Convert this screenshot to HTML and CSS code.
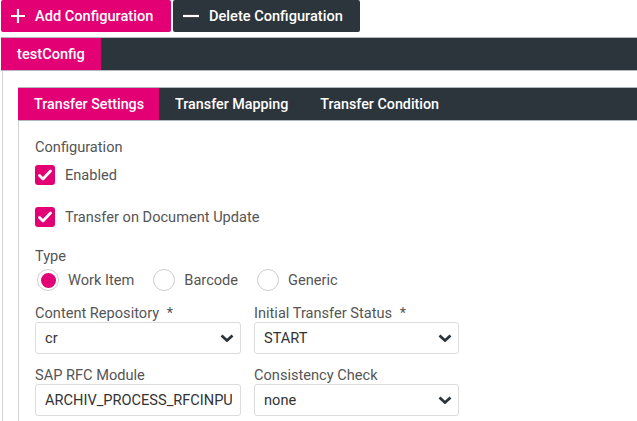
FILE: index.html
```html
<!DOCTYPE html>
<html>
<head>
<meta charset="utf-8">
<link rel="stylesheet" href="styles.css">
</head>
<body>
<div class="toolbar">
  <button class="btn btn-primary">
    <svg class="btn-icon" viewBox="0 0 14 14" width="14" height="14"><path d="M7 0v14M0 7h14" stroke="#fff" stroke-width="2.2"/></svg>
    Add Configuration
  </button>
  <button class="btn btn-dark">
    <svg class="btn-icon" viewBox="0 0 16 14" width="16" height="14"><path d="M0 7h16" stroke="#fff" stroke-width="2.2"/></svg>
    Delete Configuration
  </button>
</div>

<div class="config-tabs">
  <div class="tab tab-active">testConfig</div>
</div>

<div class="config-panel">
  <div class="inner-tabs">
    <div class="tab inner-tab tab-active">Transfer Settings</div>
    <div class="tab inner-tab">Transfer Mapping</div>
    <div class="tab inner-tab">Transfer Condition</div>
  </div>
  <div class="inner-panel">
    <div class="label">Configuration</div>
    <label class="check-row">
      <span class="checkbox"><svg viewBox="0 0 20 20" width="20" height="20"><path d="M4.5 10.5l3.5 3.5 7.5-8" fill="none" stroke="#fff" stroke-width="2.8" stroke-linecap="round" stroke-linejoin="round"/></svg></span>
      <span class="check-text">Enabled</span>
    </label>
    <label class="check-row check-row-2">
      <span class="checkbox"><svg viewBox="0 0 20 20" width="20" height="20"><path d="M4.5 10.5l3.5 3.5 7.5-8" fill="none" stroke="#fff" stroke-width="2.8" stroke-linecap="round" stroke-linejoin="round"/></svg></span>
      <span class="check-text">Transfer on Document Update</span>
    </label>

    <div class="label label-type">Type</div>
    <div class="radio-row">
      <label class="radio-item"><span class="radio radio-on"></span><span class="radio-text">Work Item</span></label>
      <label class="radio-item"><span class="radio"></span><span class="radio-text">Barcode</span></label>
      <label class="radio-item"><span class="radio"></span><span class="radio-text">Generic</span></label>
    </div>

    <div class="field-grid">
      <div class="field">
        <div class="label">Content Repository <span class="req">*</span></div>
        <div class="select"><span class="value">cr</span><svg class="chev" viewBox="0 0 14 8" width="14" height="8"><path d="M1.5 1.5l5.5 5 5.5-5" fill="none" stroke="#2d353c" stroke-width="2.8"/></svg></div>
      </div>
      <div class="field">
        <div class="label">Initial Transfer Status <span class="req">*</span></div>
        <div class="select"><span class="value">START</span><svg class="chev" viewBox="0 0 14 8" width="14" height="8"><path d="M1.5 1.5l5.5 5 5.5-5" fill="none" stroke="#2d353c" stroke-width="2.8"/></svg></div>
      </div>
      <div class="field">
        <div class="label">SAP RFC Module</div>
        <input class="input" type="text" readonly value="ARCHIV_PROCESS_RFCINPUT">
      </div>
      <div class="field">
        <div class="label">Consistency Check</div>
        <div class="select"><span class="value">none</span><svg class="chev" viewBox="0 0 14 8" width="14" height="8"><path d="M1.5 1.5l5.5 5 5.5-5" fill="none" stroke="#2d353c" stroke-width="2.8"/></svg></div>
      </div>
    </div>
  </div>
</div>
</body>
</html>
```
FILE: styles.css
```css
html, body {
  margin: 0;
  padding: 0;
  background: #fff;
  overflow: hidden;
}
body {
  font-family: Roboto, "Liberation Sans", sans-serif;
  font-size: 14.6px;
  color: #4b4b4b;
  width: 637px;
  height: 421px;
}
.toolbar {
  display: flex;
  gap: 2px;
  padding-left: 1px;
}
.btn {
  display: flex;
  align-items: center;
  gap: 10px;
  height: 32px;
  border: none;
  border-radius: 2px;
  color: #fff;
  font-family: Roboto, "Liberation Sans", sans-serif;
  font-size: 14.6px;
  font-weight: 500;
  padding: 0 10px;
  white-space: nowrap;
}
.btn-primary {
  background: #e20074;
  width: 170px;
}
.btn-dark {
  background: #2d353c;
  width: 187px;
}
.btn-icon { flex: none; }

.config-tabs {
  margin-top: 5px;
  display: flex;
  background: #2d353c;
  border-top: 1px solid #b4b9bd;
  border-bottom: 1px solid #b4b9bd;
  height: 32px;
  margin-left: 1px;
}
.tab {
  display: flex;
  align-items: center;
  color: #fff;
  font-weight: 500;
  font-size: 14.3px;
  padding: 0 16px;
  white-space: nowrap;
}
.config-tabs .tab {
  width: 100px;
  box-sizing: border-box;
  justify-content: center;
  font-size: 14.6px;
}
.tab-active {
  background: #e20074;
}
.config-panel {
  margin-left: 2px;
  border-left: 1px solid #d4d4d4;
  padding: 16px 0 0 15px;
}
.inner-tabs {
  display: flex;
  background: #2d353c;
  border-top: 1px solid #b4b9bd;
  border-bottom: 1px solid #b4b9bd;
  height: 32px;
}
.inner-tab {
  padding: 0 16px;
}
.inner-tabs .tab-active {
  padding: 0 15px 0 16px;
}
.inner-panel {
  border-left: 1px solid #d4d4d4;
  padding: 16px 0 0 16px;
  height: 300px;
}
.label {
  color: #555;
  line-height: 20px;
  height: 20px;
  white-space: nowrap;
}
.req { margin-left: 4px; }
.check-row {
  display: flex;
  align-items: center;
  gap: 10px;
  margin-top: 8px;
  height: 20px;
  color: #555;
}
.check-row-2 { margin-top: 22px; }
.checkbox {
  width: 20px;
  height: 20px;
  border-radius: 3px;
  background: #e20074;
  display: block;
  flex: none;
}
.checkbox svg { display: block; }
.label-type { margin-top: 19px; }
.radio-row {
  display: flex;
  align-items: center;
  gap: 17px;
  margin-top: 2px;
  height: 24px;
}
.radio-item {
  display: flex;
  align-items: center;
  gap: 9px;
  color: #555;
}
.radio {
  width: 22px;
  height: 22px;
  box-sizing: border-box;
  border-radius: 50%;
  border: 1px solid #cfcfcf;
  background: #fff;
  position: relative;
  margin-left: 2px;
}
.radio-on::after {
  content: "";
  position: absolute;
  left: 2.5px;
  top: 2.5px;
  width: 15px;
  height: 15px;
  border-radius: 50%;
  background: #e20074;
}
.field-grid {
  display: grid;
  grid-template-columns: 206px 205px;
  column-gap: 13px;
  row-gap: 12px;
  margin-top: 12px;
}
.field .label {
  line-height: 18px;
  height: 18px;
}
.select, .input {
  box-sizing: border-box;
  height: 32px;
  border: 1px solid #dcdcdc;
  border-radius: 3px;
  display: flex;
  align-items: center;
  padding: 0 6px 0 9px;
  color: #333;
  overflow: hidden;
  white-space: nowrap;
  background: #fff;
  font-family: Roboto, "Liberation Sans", sans-serif;
  font-size: 14.6px;
  margin: 0;
  outline: none;
}
.input {
  width: 100%;
  padding-right: 8px;
}
.value { flex: 1; overflow: hidden; }
.chev { flex: none; }
```
